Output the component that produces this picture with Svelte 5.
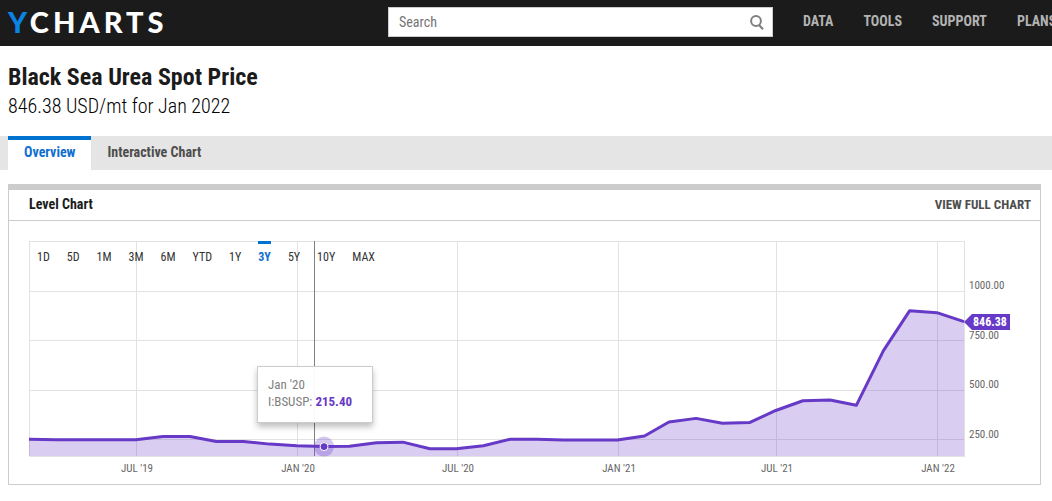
<script lang="ts">
  const navLinks = ["DATA", "TOOLS", "SUPPORT", "PLANS"];
  const ranges = ["1D", "5D", "1M", "3M", "6M", "YTD", "1Y", "3Y", "5Y", "10Y", "MAX"];
  const MONTHS = ["Jan", "Feb", "Mar", "Apr", "May", "Jun", "Jul", "Aug", "Sep", "Oct", "Nov", "Dec"];
  const DAY = 86400000;

  // Month-end spot prices, USD/mt, starting Feb 2019
  const prices = [
    253, 250, 250, 250, 250, 267, 266, 241, 241, 228, 220,
    215.4, 217, 235, 238, 205, 205, 220, 253, 253, 249, 249, 249,
    269, 340, 358, 333, 337, 398, 447, 451, 424, 700, 902, 892,
    846.38,
  ];

  const points = prices.map((value, i) => {
    const date = new Date(Date.UTC(2019, i + 2, 0));
    return { value, date, day: date.getTime() / DAY };
  });

  const firstDay = points[0].day;
  const lastDay = points[points.length - 1].day;

  const PLOT_H = 215;
  const AXIS_W = 55; // room for the price labels
  const Y_MIN = 168;
  const Y_MAX = 1254;
  const yTicks = [1000, 750, 500, 250];

  let activeRange = $state("3Y");
  let width = $state(991);
  let cursor = $state(0.3045); // pointer position, 0–1 across the plot

  const plotW = $derived(width - AXIS_W);
  const x = (day: number) => ((day - firstDay) / (lastDay - firstDay)) * (plotW - 1);
  const y = (value: number) => ((Y_MAX - value) / (Y_MAX - Y_MIN)) * PLOT_H;

  const line = $derived(points.map((p) => `${x(p.day)},${y(p.value)}`).join(" "));
  const xTicks = $derived(
    points
      .filter((p) => p.date.getUTCMonth() === 5 || p.date.getUTCMonth() === 11)
      .map((p) => {
        const next = new Date(p.date.getTime() + DAY);
        const label = MONTHS[next.getUTCMonth()].toUpperCase() + " '" + (next.getUTCFullYear() % 100);
        return { px: Math.floor(x(p.day + 1)), label };
      })
  );

  const hovered = $derived.by(() => {
    const target = cursor * plotW;
    return points.reduce((a, b) => (Math.abs(x(b.day) - target) < Math.abs(x(a.day) - target) ? b : a));
  });
  const hoverLabel = $derived(
    MONTHS[hovered.date.getUTCMonth()] + " '" + (hovered.date.getUTCFullYear() % 100)
  );
  const last = points[points.length - 1];
  const cursorX = $derived(Math.round(cursor * plotW));

  function track(e: MouseEvent) {
    const box = (e.currentTarget as SVGElement).getBoundingClientRect();
    cursor = Math.min(1, Math.max(0, (e.clientX - box.left) / plotW));
  }
</script>

<header class="topbar">
  <a class="logo" href="/" aria-label="YCharts"><span class="logo-y">Y</span>CHARTS</a>
  <form class="search" role="search">
    <input type="search" placeholder="Search" aria-label="Search" />
    <button type="submit" aria-label="Submit search">
      <svg width="14" height="15" viewBox="0 0 14 15">
        <circle cx="6" cy="6" r="4.9" fill="none" stroke="#808080" stroke-width="2" />
        <path d="M9 10 L13 14.2" stroke="#808080" stroke-width="2.2" />
      </svg>
    </button>
  </form>
  <nav class="nav">
    {#each navLinks as item}
      <a href="/{item.toLowerCase()}">{item}</a>
    {/each}
  </nav>
</header>

<main>
  <div class="heading">
    <h1>Black Sea Urea Spot Price</h1>
    <p>846.38 USD/mt for Jan 2022</p>
  </div>

  <nav class="tabs">
    <a class="tab active" href="#overview">Overview</a>
    <a class="tab" href="#chart">Interactive Chart</a>
  </nav>

  <section class="panel">
    <div class="panel-head">
      <h2>Level Chart</h2>
      <a href="#full">VIEW FULL CHART</a>
    </div>

    <div class="chart" bind:clientWidth={width}>
      <svg {width} height="243" role="img" aria-label="Level chart" onmousemove={track}>
        <!-- Grid -->
        <g stroke="#e2e2e2" shape-rendering="crispEdges">
          <rect x="0.5" y="0.5" width={plotW - 1} height={PLOT_H} fill="none" />
          {#each yTicks as tick}
            {@const py = Math.floor(y(tick)) + 0.5}
            <line x1="0" y1={py} x2={plotW} y2={py} />
          {/each}
          {#each xTicks as tick}
            <line x1={tick.px + 0.5} y1="0" x2={tick.px + 0.5} y2={PLOT_H} />
          {/each}
        </g>

        <!-- Crosshair -->
        <line x1={cursorX + 0.5} y1="0" x2={cursorX + 0.5} y2={PLOT_H} stroke="#808080" />

        <!-- Series -->
        <polygon points="0,{PLOT_H} {line} {plotW - 1},{PLOT_H}" fill="#6639c6" fill-opacity="0.25" />
        <polyline points={line} fill="none" stroke="#6639c6" stroke-width="3" stroke-linejoin="round" />
        <circle cx={x(hovered.day)} cy={y(hovered.value)} r="10" fill="#6639c6" fill-opacity="0.28" />
        <circle cx={x(hovered.day)} cy={y(hovered.value)} r="4" fill="#6639c6" stroke="#fff" />

        <!-- Axis labels -->
        {#each yTicks as tick}
          <text class="axis" x={plotW + 4} y={y(tick) - 2}>{tick.toFixed(2)}</text>
        {/each}
        {#each xTicks as tick}
          <text class="axis" x={tick.px + 1} y="231" text-anchor="middle">{tick.label}</text>
        {/each}

        <!-- Last value flag -->
        <g transform="translate({plotW - 1}, {Math.round(y(last.value))})">
          <path d="M0 0 L8 -8 H46 V8 H8 Z" fill="#6639c6" />
          <text class="flag" x="9" y="4">{last.value.toFixed(2)}</text>
        </g>
      </svg>

      <div class="ranges">
        {#each ranges as r}
          <button type="button" class:active={r === activeRange} onclick={() => (activeRange = r)}>{r}</button>
        {/each}
      </div>

      <div class="tooltip" style="left: {cursorX - 57}px">
        <div>{hoverLabel}</div>
        <div>I:BSUSP: <strong>{hovered.value.toFixed(2)}</strong></div>
      </div>
    </div>
  </section>
</main>

<style>
  :global(body) {
    margin: 0;
    overflow-x: hidden;
    background: #fff;
    color: #1b1b1b;
    font-family: "Roboto Condensed", "Liberation Sans Narrow", Roboto, sans-serif;
  }
  a {
    color: inherit;
    text-decoration: none;
  }
  h1, h2, p {
    margin: 0;
  }

  .topbar {
    display: grid;
    grid-template-columns: 1fr 385px 279px;
    align-items: center;
    height: 46px;
    padding-left: 8px;
    overflow: hidden;
    box-sizing: border-box;
    background: #1b1b1b;
  }
  .logo {
    margin-bottom: 2px;
    color: #fff;
    font-family: Lato, sans-serif;
    font-size: 29px;
    line-height: 44px;
    font-weight: 900;
    letter-spacing: 4px;
  }
  .logo-y {
    color: #0a84e4;
  }
  .search {
    display: flex;
    align-items: center;
    height: 30px;
    margin-bottom: 2px;
    box-sizing: border-box;
    border: 1px solid #ccc;
    background: #fff;
  }
  .search input {
    flex: 1;
    min-width: 0;
    padding: 0 10px;
    border: 0;
    outline: 0;
    background: none;
    font-family: inherit;
    font-size: 14px;
  }
  .search input::placeholder {
    color: #757575;
  }
  .search button {
    display: flex;
    padding: 0 8px;
    border: 0;
    background: none;
  }
  .nav {
    display: flex;
    gap: 30px;
    padding-left: 30px;
    margin-bottom: 4px;
    color: #b3b3b3;
    font-size: 14px;
    font-weight: 700;
    white-space: nowrap;
  }

  .heading {
    padding: 17px 8px 15px;
  }
  h1 {
    font-size: 24px;
    line-height: 28px;
    font-weight: 700;
  }
  .heading p {
    color: #000;
    font-size: 20px;
    line-height: 30px;
    font-weight: 300;
  }

  .tabs {
    display: flex;
    padding-left: 8px;
    background: #e5e5e5;
  }
  .tab {
    padding: 0 16px;
    height: 30px;
    border-top: 4px solid #e5e5e5;
    color: #4d4d4d;
    font-size: 14px;
    line-height: 25px;
    font-weight: 700;
  }
  .tab.active {
    border-color: #0073d1;
    background: #fff;
    color: #0f6fcf;
  }

  .panel {
    margin: 14px 11px 16px 8px;
    border: 1px solid #ccc;
    border-top-width: 6px;
  }
  .panel-head {
    display: flex;
    justify-content: space-between;
    padding: 0 9px 0 20px;
    border-bottom: 1px solid #ccc;
    line-height: 30px;
  }
  h2 {
    font-size: 14px;
    line-height: 29px;
    font-weight: 700;
  }
  .panel-head a {
    color: #4d4d4d;
    font-size: 13px;
    font-weight: 700;
  }

  .chart {
    position: relative;
    margin: 20px 20px 0;
  }
  .chart svg {
    display: block;
  }
  .axis {
    fill: #666;
    font-size: 11px;
  }
  .flag {
    fill: #fff;
    font-size: 12px;
    font-weight: 700;
  }
  .ranges {
    position: absolute;
    top: 0;
    left: 8px;
    display: flex;
    gap: 17px;
  }
  .ranges button {
    padding: 4px 0;
    border: 0;
    border-top: 3px solid transparent;
    background: none;
    color: #333;
    font-family: inherit;
    font-size: 12px;
    line-height: 18px;
    cursor: pointer;
  }
  .ranges button.active {
    border-color: #0073d1;
    color: #0f6fcf;
    font-weight: 700;
  }
  .tooltip {
    position: absolute;
    top: 125px;
    padding: 9px 20px 12px 10px;
    border: 1px solid #ccc;
    background: rgba(255, 255, 255, 0.95);
    box-shadow: 0 4px 6px rgba(0, 0, 0, 0.25);
    color: #808080;
    font-size: 13px;
    line-height: 17px;
    white-space: nowrap;
    pointer-events: none;
  }
  .tooltip strong {
    color: #6639c6;
  }
</style>
